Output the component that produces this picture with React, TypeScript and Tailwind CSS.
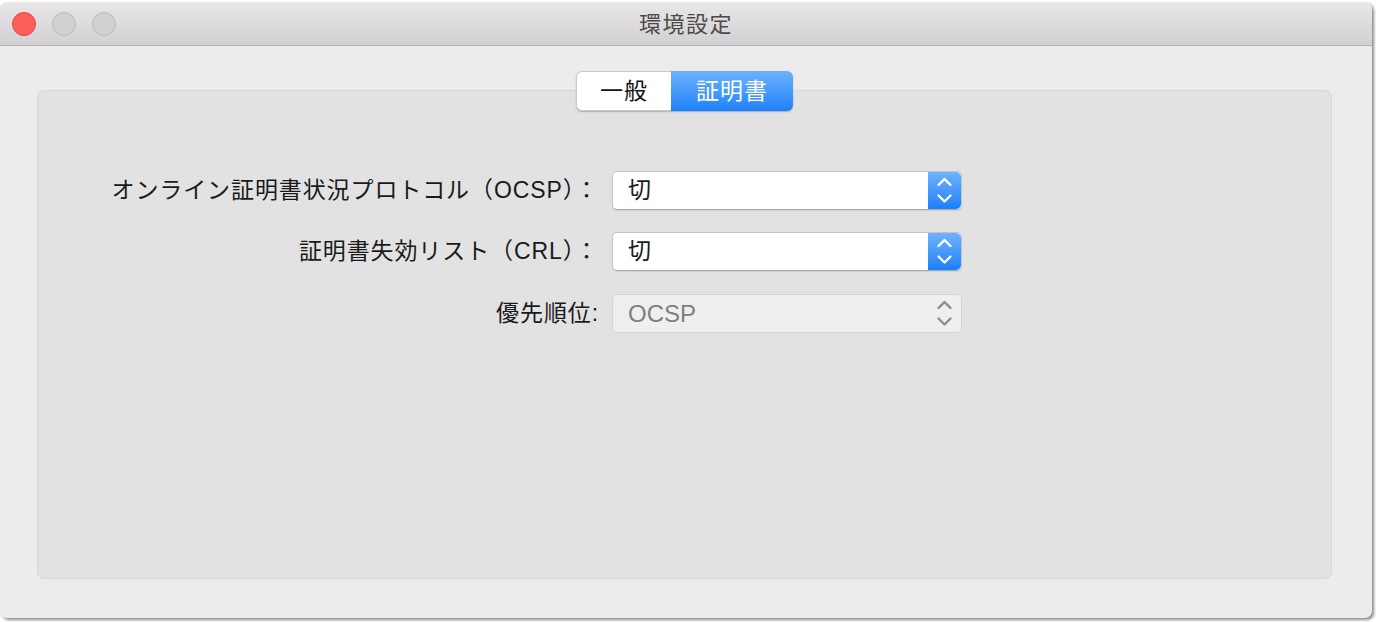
import type { ReactNode } from "react";

const FONT = "font-['Liberation_Sans','Noto_Sans_CJK_JP',sans-serif]";

/** 右端の上下シェブロン（ポップアップボタン） */
function Stepper({ disabled }: { disabled?: boolean }) {
  if (disabled) {
    return (
      <div className="w-[33px] h-full shrink-0 flex items-center justify-center">
        <svg width="33" height="39" viewBox="0 0 33 39" fill="none">
          <polyline points="10.5,14 16.5,8 22.5,14" stroke="#8c8c8c" strokeWidth="2.4" strokeLinecap="round" strokeLinejoin="round" />
          <polyline points="10.5,24.5 16.5,30.5 22.5,24.5" stroke="#8c8c8c" strokeWidth="2.4" strokeLinecap="round" strokeLinejoin="round" />
        </svg>
      </div>
    );
  }
  return (
    <div className="w-[33px] h-full shrink-0 rounded-r-[5px] bg-gradient-to-b from-[#6db2fb] to-[#187ffb] flex items-center justify-center">
      <svg width="33" height="39" viewBox="0 0 33 39" fill="none">
        <polyline points="10.5,14 16.5,8 22.5,14" stroke="#ffffff" strokeWidth="2.4" strokeLinecap="round" strokeLinejoin="round" />
        <polyline points="10.5,24.5 16.5,30.5 22.5,24.5" stroke="#ffffff" strokeWidth="2.4" strokeLinecap="round" strokeLinejoin="round" />
      </svg>
    </div>
  );
}

function Popup({ value, disabled }: { value: string; disabled?: boolean }) {
  return (
    <div
      className={
        disabled
          ? "w-[350px] h-[39px] flex items-stretch rounded-[5px] border border-[#d3d3d3] bg-[#efefef]"
          : "w-[350px] h-[39px] flex items-stretch rounded-[5px] border border-[#c4c4c4] border-b-[#a9a9a9] bg-white shadow-[0_1px_1px_rgba(0,0,0,0.08)]"
      }
    >
      <div
        className={
          disabled
            ? "flex-1 flex items-center pl-[15px] text-[24px] text-[#7f7f7f]"
            : "flex-1 flex items-center pl-[15px] text-[23px] text-[#1a1a1a]"
        }
      >
        {value}
      </div>
      <Stepper disabled={disabled} />
    </div>
  );
}

function Row({ label, children, className }: { label: string; children: ReactNode; className?: string }) {
  return (
    <div className={"flex items-center " + (className ?? "")}>
      <div className="w-[563px] text-right pr-[2px] text-[23px] text-[#1a1a1a] tracking-[0.9px]">{label}</div>
      <div className="ml-[11px]">{children}</div>
    </div>
  );
}

function Light({ red }: { red?: boolean }) {
  return (
    <div
      className={
        red
          ? "w-[24px] h-[24px] rounded-full bg-[#fc5f57] border border-[#e0443e]"
          : "w-[24px] h-[24px] rounded-full bg-[#d1d1d1] border border-[#bababa]"
      }
    />
  );
}

export default function App() {
  return (
    <div className={"w-[1376px] h-[622px] bg-white overflow-hidden " + FONT}>
      <div className="mt-[2px] w-[1372px] h-[616px] rounded-[7px] bg-[#ececec] flex flex-col overflow-hidden shadow-[2px_2px_3px_rgba(0,0,0,0.45)]">
        {/* タイトルバー */}
        <div className="h-[44px] shrink-0 flex items-center bg-gradient-to-b from-[#e9e7e9] to-[#d2d0d2] border-b border-[#b4b4b4]">
          <div className="flex items-center gap-[16px] pl-[12px] w-[200px]">
            <Light red />
            <Light />
            <Light />
          </div>
          <div className="flex-1 text-center text-[22px] tracking-[1.5px] text-[#4b4b4b] pr-[200px] pt-[1px]">環境設定</div>
        </div>

        {/* 本体 */}
        <div className="flex-1 flex flex-col pl-[37px] pr-[40px] pt-[25px] pb-[39px]">
          <div className="relative z-10 flex justify-center">
            <div className="flex h-[40px] rounded-[6px] shadow-[0_1px_1.5px_rgba(0,0,0,0.25)] text-[23px] tracking-[1px]">
              <div className="w-[95px] flex items-center justify-center rounded-l-[6px] bg-white border border-[#c9c9c9] border-r-0 text-[#111]">
                一般
              </div>
              <div className="w-[122px] flex items-center justify-center rounded-r-[6px] bg-gradient-to-b from-[#6cb2fb] to-[#1a80fb] text-white">
                証明書
              </div>
            </div>
          </div>

          <div className="-mt-[21px] flex-1 rounded-[7px] bg-[#e2e2e2] border border-[#d6d6d6] pt-[80px]">
            <Row label="オンライン証明書状況プロトコル（OCSP）：">
              <Popup value="切" />
            </Row>
            <Row label="証明書失効リスト（CRL）：" className="mt-[22px]">
              <Popup value="切" />
            </Row>
            <Row label="優先順位:" className="mt-[23px]">
              <Popup value="OCSP" disabled />
            </Row>
          </div>
        </div>
      </div>
    </div>
  );
}
